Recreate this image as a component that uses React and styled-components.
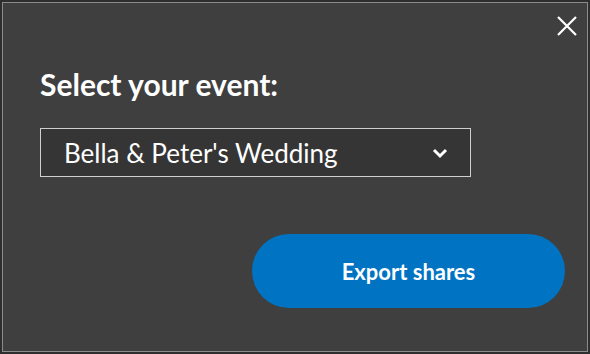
import styled, { createGlobalStyle } from "styled-components";

const GlobalStyle = createGlobalStyle`
  html, body {
    margin: 0;
    padding: 0;
    background: #2e2e2e;
  }
  body {
    font-family: Lato, "Open Sans", sans-serif;
  }
`;

const Page = styled.div`
  width: 590px;
  height: 354px;
  padding: 2px;
  box-sizing: border-box;
`;

const Dialog = styled.div`
  position: relative;
  height: 100%;
  box-sizing: border-box;
  border: 1px solid #8c8c8c;
  background: #3f3f3f;
  padding: 63px 22px 0 37px;
  display: flex;
  flex-direction: column;
`;

const CloseButton = styled.button`
  position: absolute;
  top: 10px;
  right: 7px;
  width: 26px;
  height: 26px;
  padding: 0;
  border: none;
  background: transparent;
  cursor: pointer;
  display: flex;
  align-items: center;
  justify-content: center;
`;

const Title = styled.h2`
  margin: 0;
  color: #ffffff;
  font-size: 30px;
  font-weight: 700;
  line-height: 36px;
`;

const Select = styled.div`
  margin-top: 26px;
  width: 431px;
  height: 49px;
  box-sizing: border-box;
  border: 1px solid #cfcfcf;
  background: #353535;
  display: flex;
  align-items: center;
  justify-content: space-between;
  padding: 0 22px 0 23px;
  color: #ffffff;
  font-size: 26px;
`;

const Actions = styled.div`
  margin-top: 57px;
  display: flex;
  justify-content: flex-end;
`;

const ExportButton = styled.button`
  width: 313px;
  height: 74px;
  border: none;
  border-radius: 37px;
  background: #0073c2;
  color: #ffffff;
  font-family: Lato, "Open Sans", sans-serif;
  font-size: 22px;
  font-weight: 700;
  cursor: pointer;
`;

export default function App() {
  return (
    <Page>
      <GlobalStyle />
      <Dialog>
        <CloseButton aria-label="Close">
          <svg width="22" height="22" viewBox="0 0 22 22">
            <path d="M2 2 L20 20 M20 2 L2 20" stroke="#ffffff" strokeWidth="2.2" />
          </svg>
        </CloseButton>
        <Title>Select your event:</Title>
        <Select>
          <span>Bella &amp; Peter's Wedding</span>
          <svg width="16" height="12" viewBox="0 0 16 12">
            <path d="M2 3 L8 9 L14 3" stroke="#ffffff" strokeWidth="3" fill="none" />
          </svg>
        </Select>
        <Actions>
          <ExportButton>Export shares</ExportButton>
        </Actions>
      </Dialog>
    </Page>
  );
}
